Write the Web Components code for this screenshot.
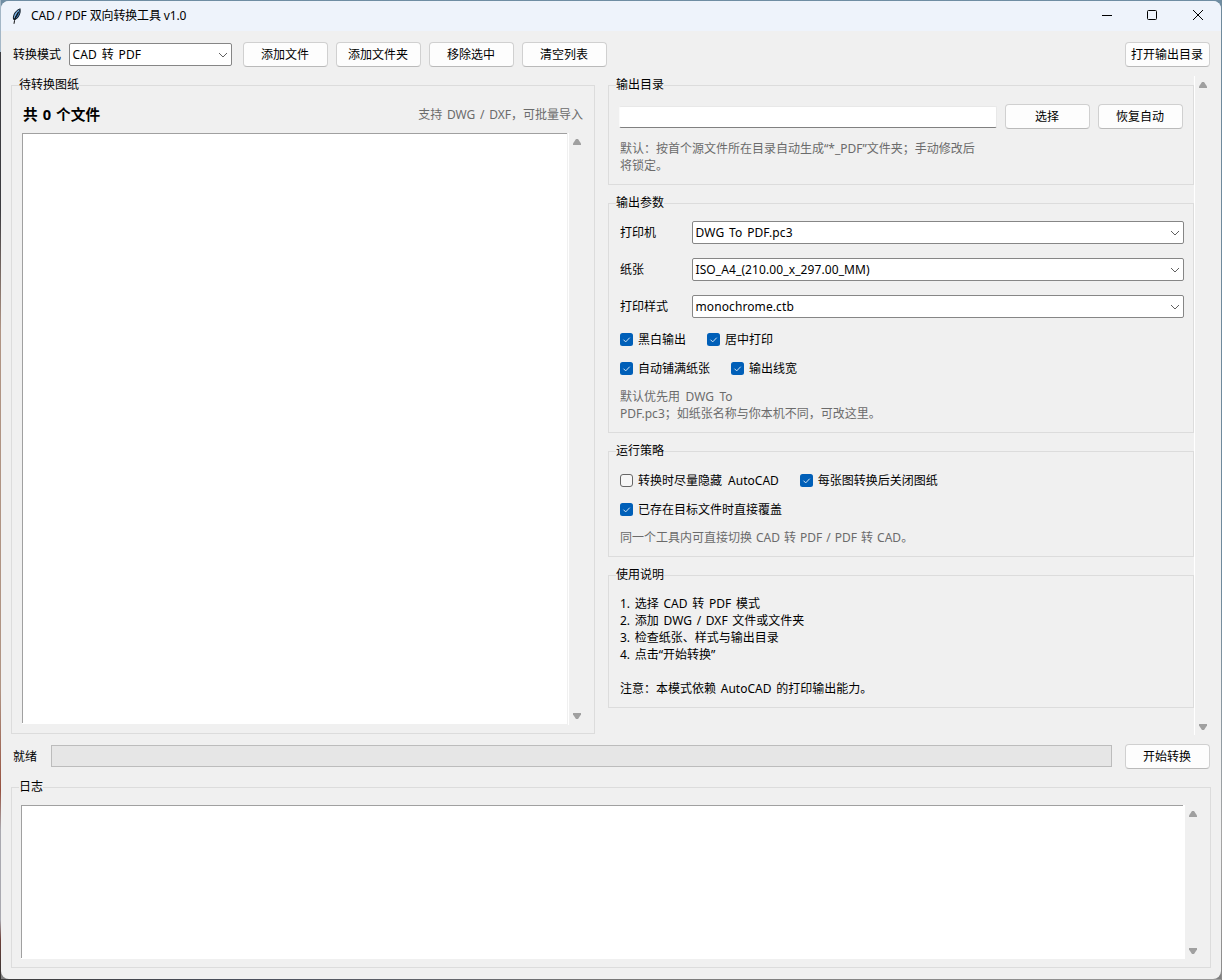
<!DOCTYPE html>
<html lang="zh-CN">
<head>
<meta charset="UTF-8">
<title>CAD / PDF 双向转换工具 v1.0</title>
<style>
    html, body {
        margin: 0;
        height: 100%;
        overflow: hidden;
    }

    body {
        box-sizing: border-box;
        padding: 1px;
        font: 12px/17px "Noto Sans", "Noto Sans CJK SC", sans-serif;
        color: #000;
        background:
            linear-gradient(#a3b6c6 0 52px, #3c3c40 52px 210px, #b09484 330px 690px, #96513f 790px, #a9a9b0 830px 920px, #6d4038 940px, #333 978px) left / 1px 100% no-repeat,
            linear-gradient(#6f8a9c 0 60%, #a5a5a5 85%, #8a8a8a) right / 1px 100% no-repeat,
            linear-gradient(90deg, #3c3c3c, #4a4f5c 20%, #777 50%, #999) bottom / 100% 1px no-repeat,
            linear-gradient(#6f8da3, #7a97ab 50%, #808080 50%);
    }
</style>
</head>
<body>

<app-window>
    <title-bar slot="title">CAD / PDF 双向转换工具 v1.0</title-bar>
    <main-view></main-view>
</app-window>

<script>
class AppWindow extends HTMLElement {
    connectedCallback() {
        this.attachShadow({ mode: 'open' });
        this.shadowRoot.innerHTML = `
            <style>
                :host {
                    display: flex;
                    flex-direction: column;
                    width: 1220px;
                    height: 978px;
                    border-radius: 8px;
                    overflow: hidden;
                    background: #f0f0f0;
                }
            </style>
            <slot name="title"></slot>
            <slot></slot>
        `;
    }
}

class TitleBar extends HTMLElement {
    connectedCallback() {
        this.attachShadow({ mode: 'open' });
        this.shadowRoot.innerHTML = `
            <style>
                :host {
                    display: flex;
                    align-items: center;
                    height: 30px;
                    background: #eef3fb;
                }
                .feather { margin-left: 8px; }
                .title {
                    flex: 1;
                    margin-left: 6px;
                    padding-bottom: 2px;
                    letter-spacing: -0.14px;
                    white-space: nowrap;
                }
                .controls {
                    display: flex;
                    margin-right: -1px;
                }
            </style>
            <svg class="feather" width="16" height="16" viewBox="0 0 16 16">
                <path d="M11.300 .3C8.400 1 4.800 4.600 4 8.500c-.3 1.600 0 2.700.4 3.300l1.600.2c3-1.500 5-4.200 5.600-7.800.2-1.400.1-3 -.3-3.900z" fill="#14202c"/>
                <path d="M10.700 1.300C8.400 2.500 5.700 5.200 5 8.500c-.2 1-.1 1.700.1 2.200C6.900 8 9 5 10.700 1.300z" fill="#7db4e6"/>
                <path d="M11 2.300C9.600 6 7.800 8.800 6 11.200c2.300-1.300 4.700-4.300 5-8.900z" fill="#3f7fc4"/>
                <path d="M9.300 4C7 7.500 5.500 11 5 15.800" stroke="#111" stroke-width="1" fill="none"/>
            </svg>
            <span class="title"><slot></slot></span>
            <div class="controls">
                <svg width="46" height="30" viewBox="0 0 46 30"><path d="M18 14.500h10" stroke="#000" fill="none"/></svg>
                <svg width="46" height="30" viewBox="0 0 46 30"><rect x="17.500" y="9.500" width="9" height="9" rx="1" stroke="#000" fill="none"/></svg>
                <svg width="46" height="30" viewBox="0 0 46 30"><path d="M17 9l10 10m0-10l-10 10" stroke="#000" fill="none"/></svg>
            </div>
        `;
    }
}

class PushButton extends HTMLElement {
    connectedCallback() {
        this.attachShadow({ mode: 'open' });
        this.shadowRoot.innerHTML = `
            <style>
                :host {
                    display: block;
                    flex: none;
                    box-sizing: border-box;
                    width: 85px;
                    height: 25px;
                    padding-right: 1px;
                    border: 1px solid #d0d0d0;
                    border-bottom-color: #bababa;
                    border-radius: 4px;
                    background: #fdfdfd;
                    line-height: 23px;
                    text-align: center;
                    white-space: nowrap;
                }
            </style>
            <slot></slot>
        `;
    }
}

class ComboBox extends HTMLElement {
    connectedCallback() {
        this.attachShadow({ mode: 'open' });
        this.shadowRoot.innerHTML = `
            <style>
                :host {
                    display: flex;
                    align-items: center;
                    box-sizing: border-box;
                    height: 23px;
                    padding: 0 3px 0 2.5px;
                    border: 1px solid #868686;
                    border-radius: 2px;
                    background: #fff;
                    letter-spacing: 0.1px;
                    white-space: nowrap;
                }
                span { flex: 1; }
            </style>
            <span><slot></slot></span>
            <svg width="10" height="6" viewBox="0 0 10 6"><path d="M1 1l4 4 4-4" stroke="#606060" fill="none"/></svg>
        `;
    }
}

class CheckBox extends HTMLElement {
    connectedCallback() {
        this.attachShadow({ mode: 'open' });
        const checked = this.hasAttribute('checked');
        this.shadowRoot.innerHTML = `
            <style>
                :host {
                    display: flex;
                    align-items: center;
                    gap: 5px;
                    height: 17px;
                    white-space: nowrap;
                }
                svg { flex: none; }
            </style>
            <svg width="13" height="13" viewBox="0 0 13 13">
                ${checked
                    ? `<rect width="13" height="13" rx="2.500" fill="#005fb8"/><path d="M3.500 6.700l2.200 2.200 4-4.200" stroke="#d5e6f5" fill="none"/>`
                    : `<rect x=".5" y=".5" width="12" height="12" rx="2.500" fill="#f6f6f6" stroke="#666"/>`}
            </svg>
            <span><slot></slot></span>
        `;
    }
}

// Labelled frame: the caption sits on top of the border line
class GroupFrame extends HTMLElement {
    connectedCallback() {
        this.attachShadow({ mode: 'open' });
        this.shadowRoot.innerHTML = `
            <style>
                :host {
                    display: flex;
                    flex-direction: column;
                    box-sizing: border-box;
                    border: 1px solid #dcdcdc;
                }
                .label {
                    align-self: flex-start;
                    height: 17px;
                    margin: -10px 0 0 7px;
                    background: #f0f0f0;
                    white-space: nowrap;
                }
            </style>
            <div class="label">${this.getAttribute('label')}</div>
            <slot></slot>
        `;
    }
}

class ScrollBar extends HTMLElement {
    connectedCallback() {
        this.attachShadow({ mode: 'open' });
        this.shadowRoot.innerHTML = `
            <style>
                :host {
                    display: flex;
                    flex: none;
                    flex-direction: column;
                    justify-content: space-between;
                    box-sizing: border-box;
                    width: 17px;
                    padding: 6px 0 5px 4px;
                }
            </style>
            <svg width="8" height="6" viewBox="0 0 8 6"><path d="M3 0h2l3 4.500V6H0V4.500z" fill="#a0a0a0"/></svg>
            <svg width="8" height="6" viewBox="0 0 8 6"><path d="M3 6h2l3-4.500V0H0v1.500z" fill="#a0a0a0"/></svg>
        `;
    }
}

class TextPane extends HTMLElement {
    connectedCallback() {
        this.attachShadow({ mode: 'open' });
        this.shadowRoot.innerHTML = `
            <style>
                :host {
                    display: flex;
                    min-height: 0;
                }
                .area {
                    flex: 1;
                    background:
                        linear-gradient(#a0a0a0, #a0a0a0) left top / calc(100% - var(--trim, 2px)) 1px no-repeat,
                        linear-gradient(#a0a0a0, #a0a0a0) left top / 1px calc(100% - 1px) no-repeat,
                        #fff;
                }
                .edge {
                    display: var(--edge, none);
                    width: 1px;
                    margin: 0 0 -1px 1px;
                    background: #fff;
                }
            </style>
            <div class="area"></div>
            <div class="edge"></div>
            <scroll-bar></scroll-bar>
        `;
    }
}

class MainView extends HTMLElement {
    connectedCallback() {
        this.attachShadow({ mode: 'open' });
        this.shadowRoot.innerHTML = `
            <style>
                :host {
                    display: flex;
                    flex: 1;
                    flex-direction: column;
                    min-height: 0;
                    padding: 11px 10px 11px;
                    white-space: nowrap;
                    word-spacing: 1.6px;
                }
                .toolbar {
                    display: flex;
                    align-items: center;
                    gap: 8px;
                    height: 25px;
                    padding: 0 1px 0 2px;
                }
                .toolbar combo-box { width: 163px; margin-right: 3px; }
                .toolbar push-button:last-child { margin-left: auto; }
                .panes {
                    display: flex;
                    height: 659px;
                    margin: 9px -2px 0 0;
                }
                .files { flex: none; width: 584px; margin: 9px 13px 1px 0; }
                .summary {
                    display: flex;
                    justify-content: space-between;
                    align-items: center;
                    height: 22px;
                    margin: 10px 11px 0;
                }
                .summary b { font-size: 14.67px; letter-spacing: 0.1px; word-spacing: 1px; }
                .hint { color: #6b6b6b; }
                .files text-pane {
                    --edge: block;
                    --trim: 0px;
                    flex: 1;
                    margin: 8px 8px 9px 10px;
                }
                .settings { flex: none; width: 586px; padding-top: 9px; }
                .settings group-frame { margin-bottom: 18px; }
                .edge { flex: none; width: 1px; background: #fff; }
                .output { height: 100px; }
                .params { height: 230px; }
                .policy { height: 106px; }
                .help { height: 133px; }
                .path {
                    display: flex;
                    align-items: center;
                    margin: 11px 10px 0 10px;
                }
                .entry {
                    flex: 1;
                    height: 20px;
                    margin-right: 8px;
                    border: 1px solid #e8e8e8;
                    border-left-color: #fafafa;
                    border-bottom-color: #808080;
                    border-radius: 2px;
                    background: #fff;
                }
                .path push-button + push-button { margin-left: 8px; }
                .output .hint { margin: 11px 11px 0; }
                .field {
                    display: flex;
                    align-items: center;
                    height: 23px;
                    margin: 14px 9px 0 11px;
                }
                .field:first-of-type { margin-top: 10px; }
                .field span { width: 72px; }
                .field combo-box { flex: 1; }
                .checks {
                    display: flex;
                    gap: 21px;
                    margin: 12px 11px 0;
                }
                .params .first { margin-top: 13px; }
                .params .hint { margin: 11px 11px 0; word-spacing: 2.4px; }
                .policy .first { margin-top: 13px; word-spacing: 3px; }
                .policy .hint { margin: 11px 11px 0; word-spacing: 0.9px; }
                .help p { margin: 12px 11px 0; }
                .run {
                    display: flex;
                    align-items: center;
                    height: 25px;
                    margin-top: 9px;
                    padding: 0 1px 0 2px;
                }
                .progress {
                    flex: 1;
                    height: 20px;
                    margin: 0 13px 1px 14px;
                    border: 1px solid #bcbcbc;
                    background: #e6e6e6;
                }
                .log { flex: none; height: 181px; margin-top: 18px; }
                .log text-pane { flex: 1; margin: 10px 8px 8px 9px; }
            </style>

            <div class="toolbar">
                <span>转换模式</span>
                <combo-box>CAD 转 PDF</combo-box>
                <push-button>添加文件</push-button>
                <push-button>添加文件夹</push-button>
                <push-button>移除选中</push-button>
                <push-button>清空列表</push-button>
                <push-button>打开输出目录</push-button>
            </div>

            <div class="panes">
                <group-frame class="files" label="待转换图纸">
                    <div class="summary">
                        <b>共 0 个文件</b>
                        <span class="hint">支持 DWG / DXF，可批量导入</span>
                    </div>
                    <text-pane></text-pane>
                </group-frame>

                <div class="settings">
                    <group-frame class="output" label="输出目录">
                        <div class="path">
                            <div class="entry"></div>
                            <push-button>选择</push-button>
                            <push-button>恢复自动</push-button>
                        </div>
                        <div class="hint">默认：按首个源文件所在目录自动生成“*_PDF”文件夹；手动修改后<br>将锁定。</div>
                    </group-frame>

                    <group-frame class="params" label="输出参数">
                        <div class="field"><span>打印机</span><combo-box>DWG To PDF.pc3</combo-box></div>
                        <div class="field"><span>纸张</span><combo-box>ISO_A4_(210.00_x_297.00_MM)</combo-box></div>
                        <div class="field"><span>打印样式</span><combo-box>monochrome.ctb</combo-box></div>
                        <div class="checks first">
                            <check-box checked>黑白输出</check-box>
                            <check-box checked>居中打印</check-box>
                        </div>
                        <div class="checks">
                            <check-box checked>自动铺满纸张</check-box>
                            <check-box checked>输出线宽</check-box>
                        </div>
                        <div class="hint">默认优先用 DWG To<br>PDF.pc3；如纸张名称与你本机不同，可改这里。</div>
                    </group-frame>

                    <group-frame class="policy" label="运行策略">
                        <div class="checks first">
                            <check-box>转换时尽量隐藏 AutoCAD</check-box>
                            <check-box checked>每张图转换后关闭图纸</check-box>
                        </div>
                        <div class="checks">
                            <check-box checked>已存在目标文件时直接覆盖</check-box>
                        </div>
                        <div class="hint">同一个工具内可直接切换 CAD 转 PDF / PDF 转 CAD。</div>
                    </group-frame>

                    <group-frame class="help" label="使用说明">
                        <p>1. 选择 CAD 转 PDF 模式<br>2. 添加 DWG / DXF 文件或文件夹<br>3. 检查纸张、样式与输出目录<br>4. 点击“开始转换”<br><br>注意：本模式依赖 AutoCAD 的打印输出能力。</p>
                    </group-frame>
                </div>
                <div class="edge"></div>
                <scroll-bar></scroll-bar>
            </div>

            <div class="run">
                <span>就绪</span>
                <div class="progress"></div>
                <push-button>开始转换</push-button>
            </div>

            <group-frame class="log" label="日志">
                <text-pane></text-pane>
            </group-frame>
        `;
    }
}

customElements.define('app-window', AppWindow);
customElements.define('title-bar', TitleBar);
customElements.define('push-button', PushButton);
customElements.define('combo-box', ComboBox);
customElements.define('check-box', CheckBox);
customElements.define('group-frame', GroupFrame);
customElements.define('scroll-bar', ScrollBar);
customElements.define('text-pane', TextPane);
customElements.define('main-view', MainView);
</script>
</body>
</html>
